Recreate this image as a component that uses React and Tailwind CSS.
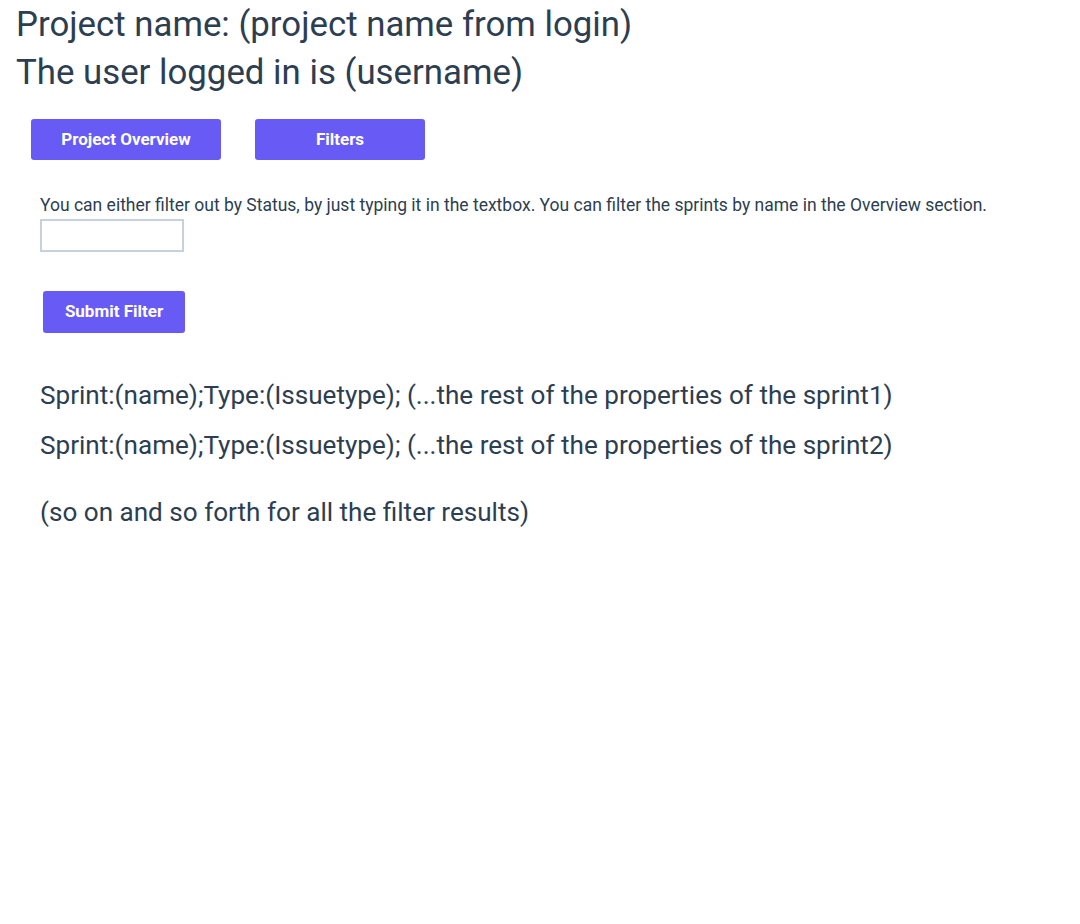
import React, { useState } from "react";

export default function App() {
  const [status, setStatus] = useState("");

  const results = [
    "Sprint:(name);Type:(Issuetype); (...the rest of the properties of the sprint1)",
    "Sprint:(name);Type:(Issuetype); (...the rest of the properties of the sprint2)"
  ];

  return (
    <div
      className="min-h-screen bg-white text-[#2c3e50]"
      style={{ fontFamily: "Roboto, 'Noto Sans', sans-serif" }}
    >
      {/* header */}
      <div className="pl-4 pt-[1px]">
        <h1 className="text-[34.8px] leading-[47px]">Project name: (project name from login)</h1>
        <h1 className="text-[34.8px] leading-[48px]">The user logged in is (username)</h1>
      </div>

      {/* nav buttons */}
      <div className="flex gap-[34px] pl-[31px] mt-[23px]">
        <button className="w-[190px] h-[41px] rounded-[3px] bg-[#675af5] text-white text-[17px] font-bold">
          Project Overview
        </button>
        <button className="w-[170px] h-[41px] rounded-[3px] bg-[#675af5] text-white text-[17px] font-bold">
          Filters
        </button>
      </div>

      {/* filter section */}
      <div className="pl-10 mt-[31px]">
        <p className="text-[17.5px] leading-[28px]">
          You can either filter out by Status, by just typing it in the textbox. You can filter the sprints by name in the Overview section.
        </p>
        <input
          value={status}
          onChange={e => setStatus(e.target.value)}
          className="block w-[144px] h-[33px] border-2 border-[#c5d1dc] outline-none px-1"
        />
        <button className="ml-[3px] mt-[39px] w-[142px] h-[42px] rounded-[3px] bg-[#675af5] text-white text-[17px] font-bold">
          Submit Filter
        </button>

        <div className="mt-[44px] flex flex-col gap-[14px]">
          {results.map((r, i) => (
            <p key={i} className="text-[26.1px] leading-[36px]">{r}</p>
          ))}
        </div>
        <p className="mt-[31px] text-[26.1px] leading-[36px]">(so on and so forth for all the filter results)</p>
      </div>
    </div>
  );
}
